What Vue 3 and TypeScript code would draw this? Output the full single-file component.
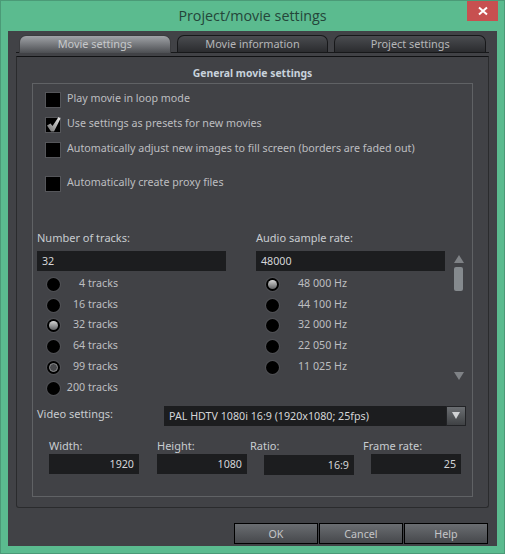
<script setup lang="ts">
import { ref } from 'vue'

const tabs = ['Movie settings', 'Movie information', 'Project settings']
const activeTab = ref(0)

const options = [
  { label: 'Play movie in loop mode', checked: false, cls: 'gap-a' },
  { label: 'Use settings as presets for new movies', checked: true, cls: 'gap-a' },
  { label: 'Automatically adjust new images to fill screen (borders are faded out)', checked: false, cls: 'gap-b' },
  { label: 'Automatically create proxy files', checked: false, cls: '' }
]

const tracks = [
  { label: '4 tracks', state: '' },
  { label: '16 tracks', state: '' },
  { label: '32 tracks', state: 'on' },
  { label: '64 tracks', state: '' },
  { label: '99 tracks', state: 'focus' },
  { label: '200 tracks', state: '' }
]

const rates = [
  { label: '48 000 Hz', state: 'on' },
  { label: '44 100 Hz', state: '' },
  { label: '32 000 Hz', state: '' },
  { label: '22 050 Hz', state: '' },
  { label: '11 025 Hz', state: '' }
]

const fields = [
  { label: 'Width:', value: '1920', cls: 'f-width' },
  { label: 'Height:', value: '1080', cls: 'f-height' },
  { label: 'Ratio:', value: '16:9', cls: 'f-ratio' },
  { label: 'Frame rate:', value: '25', cls: 'f-rate' }
]

const buttons = ['OK', 'Cancel', 'Help']
</script>

<template>
  <div class="window">
    <div class="titlebar">
      <span class="title">Project/movie settings</span>
      <div class="close">
        <svg width="10" height="10" viewBox="0 0 10 10">
          <path d="M1 1.5 L9 8.5 M9 1.5 L1 8.5" stroke="#fff" stroke-width="2" fill="none" />
        </svg>
      </div>
    </div>

    <div class="client">
      <div class="tabs">
        <div
          v-for="(tab, i) in tabs"
          :key="tab"
          class="tab"
          :class="{ active: i === activeTab }"
          @click="activeTab = i"
        >
          {{ tab }}
        </div>
      </div>

      <div class="panel">
        <div class="heading">General movie settings</div>

        <div class="group">
          <div class="checks">
            <div v-for="opt in options" :key="opt.label" class="check-row" :class="opt.cls">
              <span class="checkbox">
                <svg v-if="opt.checked" width="16" height="18" viewBox="0 0 16 18">
                  <defs>
                    <linearGradient id="tick" x1="1" y1="0" x2="0" y2="1">
                      <stop offset="0" stop-color="#ececec" />
                      <stop offset="1" stop-color="#6c6c6c" />
                    </linearGradient>
                  </defs>
                  <path d="M2 10.5 L5.5 8.5 L7.5 11 L13.5 2 L15.5 3.5 L9 16.5 L6 16.5 Z" fill="url(#tick)" />
                </svg>
              </span>
              <span class="check-label">{{ opt.label }}</span>
            </div>
          </div>

          <div class="columns">
            <div class="col">
              <div class="col-label">Number of tracks:</div>
              <div class="input">32</div>
              <div class="radios">
                <div v-for="t in tracks" :key="t.label" class="radio-row">
                  <span class="radio" :class="t.state"></span>
                  <span class="track-label">{{ t.label }}</span>
                </div>
              </div>
            </div>

            <div class="col">
              <div class="col-label">Audio sample rate:</div>
              <div class="input">48000</div>
              <div class="radios">
                <div v-for="r in rates" :key="r.label" class="radio-row">
                  <span class="radio" :class="r.state"></span>
                  <span class="rate-label">{{ r.label }}</span>
                </div>
              </div>
            </div>

            <div class="scrollbar">
              <span class="arrow up"></span>
              <span class="thumb"></span>
              <span class="arrow down"></span>
            </div>
          </div>

          <div class="video-row">
            <span class="video-label">Video settings:</span>
            <div class="select">
              <span class="select-text">PAL HDTV 1080i 16:9 (1920x1080; 25fps)</span>
              <span class="select-btn"><span class="arrow-sm"></span></span>
            </div>
          </div>

          <div class="fields">
            <div v-for="f in fields" :key="f.label" class="field" :class="f.cls">
              <div class="field-label">{{ f.label }}</div>
              <div class="input right">{{ f.value }}</div>
            </div>
          </div>
        </div>
      </div>

      <div class="footer">
        <button v-for="b in buttons" :key="b" class="btn">{{ b }}</button>
      </div>
    </div>
  </div>
</template>

<style>
html,
body {
  margin: 0;
  background: #5bbb8f;
}
</style>

<style scoped>
.window {
  width: 505px;
  height: 554px;
  box-sizing: border-box;
  border: 1px solid #4b9a77;
  background: #5bbb8f;
  padding: 0 7px 7px;
  display: flex;
  flex-direction: column;
  overflow: hidden;
  font-family: "Noto Sans", sans-serif;
  font-size: 10.7px;
  color: #bdbec0;
}

.titlebar {
  height: 30px;
  position: relative;
  display: flex;
  align-items: center;
  justify-content: center;
  flex: none;
}

.title {
  font-family: "Open Sans", sans-serif;
  font-size: 14.3px;
  color: #24463a;
  margin-bottom: 2px;
}

.close {
  position: absolute;
  top: -1px;
  right: -1px;
  width: 31px;
  height: 21px;
  background: #c75050;
  display: flex;
  align-items: center;
  justify-content: center;
}

.client {
  flex: 1;
  background: #414246;
  padding: 4px 8px 0;
  display: flex;
  flex-direction: column;
}

.tabs {
  display: flex;
  gap: 6px;
  padding: 0 3px;
  height: 18px;
  box-sizing: border-box;
  border-bottom: 1px solid #17181a;
  flex: none;
}

.tab {
  width: 152px;
  box-sizing: border-box;
  height: 17px;
  border: 1px solid #17181a;
  border-bottom: none;
  border-radius: 7px 7px 0 0;
  background: linear-gradient(#4a4c50, #2b2c2f);
  text-align: center;
  line-height: 15px;
  font-size: 10.9px;
  color: #b5b6b8;
}

.tab.active {
  height: 18px;
  border-color: #3a3b3e;
  background: linear-gradient(#a0a3a7, #4c4e52);
  color: #c6c8ca;
}

.panel {
  margin-top: 3px;
  flex: none;
  height: 452px;
  box-sizing: border-box;
  border: 1px solid #2a2b2d;
  border-top: 1px solid #111214;
  border-radius: 0 0 3px 3px;
  padding: 0 15px;
  display: flex;
  flex-direction: column;
}

.heading {
  text-align: center;
  font-weight: bold;
  font-size: 10.4px;
  height: 26px;
  line-height: 32px;
  color: #c8d2dc;
  flex: none;
}

.group {
  height: 414px;
  box-sizing: border-box;
  border: 1px solid #606265;
  flex: none;
}

.checks {
  padding: 8px 0 0 13px;
}

.check-row {
  display: flex;
  align-items: center;
  gap: 7px;
  height: 15px;
}

.check-label {
  padding-bottom: 3px;
}

.gap-a {
  margin-bottom: 10px;
}

.gap-b {
  margin-bottom: 19px;
}

.checkbox {
  width: 14px;
  height: 14px;
  flex: none;
  background: #000;
  outline: 1px solid #55565a;
  position: relative;
}

.checkbox svg {
  position: absolute;
  left: -1px;
  top: -3px;
}

.columns {
  display: flex;
  margin-top: 40px;
  padding-left: 4px;
}

.col {
  width: 189px;
  margin-right: 30px;
  flex: none;
}

.col + .col {
  margin-right: 9px;
}

.col-label {
  height: 15px;
  line-height: 14px;
  margin-bottom: 5px;
  font-size: 11px;
  color: #c8ccd0;
}

.input {
  height: 20px;
  line-height: 20px;
  background: #1c1d1f;
  color: #d4d5d7;
  padding: 0 5px;
  box-sizing: border-box;
}

.input.right {
  text-align: right;
}

.radios {
  margin-top: 3px;
}

.radio-row {
  display: flex;
  align-items: center;
  height: 20.8px;
  padding-left: 9.5px;
  white-space: nowrap;
}

.radio {
  width: 13px;
  height: 13px;
  flex: none;
  border-radius: 50%;
  background: #000;
  box-shadow: 0 0 0 1px #4f5054;
  position: relative;
}

.radio.on::after,
.radio.focus::after {
  content: "";
  position: absolute;
  left: 2px;
  top: 2px;
  width: 9px;
  height: 9px;
  box-sizing: border-box;
  border-radius: 50%;
}

.radio.on::after {
  background: linear-gradient(#d4d4d4, #5f6062);
}

.radio.focus::after {
  border: 1px solid #8d8e90;
  background: #48494c;
}

.track-label {
  width: 58.5px;
  text-align: right;
  padding-bottom: 3px;
}

.rate-label {
  margin-left: 19.5px;
  padding-bottom: 3px;
}

.scrollbar {
  width: 9px;
  height: 125px;
  margin-top: 24px;
  display: flex;
  flex-direction: column;
  align-items: center;
}

.arrow {
  width: 0;
  height: 0;
  border-left: 5px solid transparent;
  border-right: 5px solid transparent;
  flex: none;
}

.arrow.up {
  border-bottom: 8px solid #7f8286;
}

.arrow.down {
  border-top: 8px solid #7f8286;
  margin-top: auto;
}

.thumb {
  width: 9px;
  height: 24px;
  margin-top: 4px;
  border-radius: 2px;
  background: #858a8e;
}

.video-row {
  display: flex;
  align-items: flex-start;
  padding-left: 4px;
  margin-top: 7px;
}

.video-label {
  width: 127px;
  flex: none;
  line-height: 15px;
  font-size: 11px;
  color: #c8ccd0;
}

.select {
  width: 302px;
  height: 20px;
  background: #1c1d1f;
  display: flex;
  align-items: center;
  justify-content: space-between;
  color: #d4d5d7;
}

.select-text {
  padding-left: 5px;
}

.select-btn {
  width: 20px;
  height: 20px;
  box-sizing: border-box;
  border: 1px solid #222326;
  background: linear-gradient(#6b6e72, #3f4144);
  display: flex;
  align-items: center;
  justify-content: center;
}

.arrow-sm {
  width: 0;
  height: 0;
  border-left: 4px solid transparent;
  border-right: 4px solid transparent;
  border-top: 7px solid #d0d2d4;
}

.fields {
  display: flex;
  align-items: flex-start;
  padding-left: 16px;
  margin-top: 12px;
}

.field {
  width: 90px;
  flex: none;
}

.field-label {
  height: 15px;
  line-height: 16px;
  margin-bottom: 1px;
  font-size: 11px;
  color: #c8ccd0;
}

.f-height {
  margin-left: 18px;
}

.f-ratio {
  margin-left: 17px;
}

.f-ratio .field-label {
  margin-left: -14px;
  margin-bottom: 2px;
}

.f-rate {
  margin-left: 17px;
}

.f-rate .field-label {
  margin-left: -8px;
}

.footer {
  display: flex;
  justify-content: flex-end;
  gap: 1px;
  margin-top: 15px;
  padding-right: 1px;
}

.btn {
  width: 84px;
  height: 21px;
  box-sizing: border-box;
  padding: 0;
  border: 1px solid #000;
  margin: 0;
  background: linear-gradient(#6a6d71, #46484c);
  font: inherit;
  color: #c4c5c7;
}
</style>
